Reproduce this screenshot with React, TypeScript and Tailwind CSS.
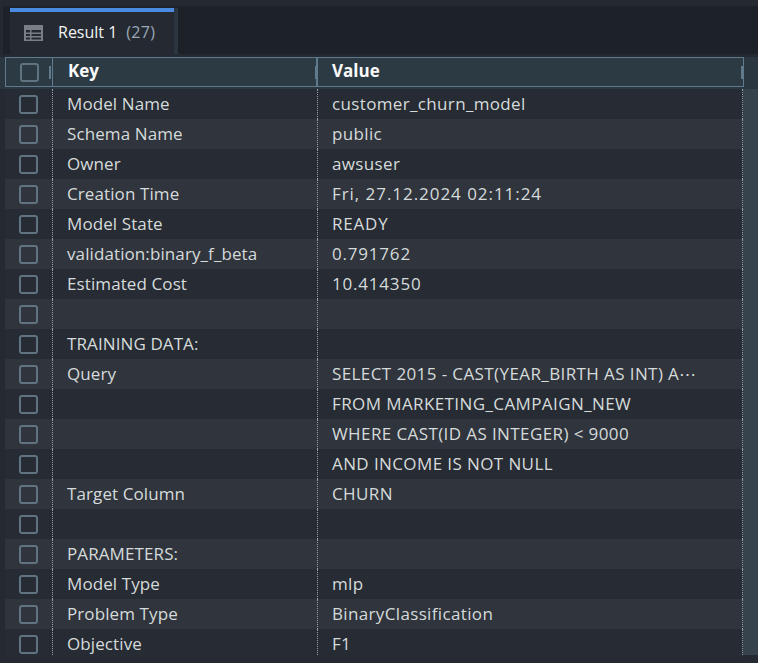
// [key, value, letter spacing for the value]
const rows: [string, string, string][] = [
  ["Model Name", "customer_churn_model", "tracking-[0.35px]"],
  ["Schema Name", "public", "tracking-[0.35px]"],
  ["Owner", "awsuser", "tracking-[0.35px]"],
  ["Creation Time", "Fri, 27.12.2024 02:11:24", "tracking-[0.95px]"],
  ["Model State", "READY", "tracking-[0.8px]"],
  ["validation:binary_f_beta", "0.791762", "tracking-[0.8px]"],
  ["Estimated Cost", "10.414350", "tracking-[0.8px]"],
  ["", "", ""],
  ["TRAINING DATA:", "", ""],
  ["Query", "SELECT 2015 - CAST(YEAR_BIRTH AS INT) A⋯", "tracking-[0.4px]"],
  ["", "FROM MARKETING_CAMPAIGN_NEW", "tracking-[0.4px]"],
  ["", "WHERE CAST(ID AS INTEGER) < 9000", "tracking-[0.4px]"],
  ["", "AND INCOME IS NOT NULL", "tracking-[0.4px]"],
  ["Target Column", "CHURN", "tracking-[0.4px]"],
  ["", "", ""],
  ["PARAMETERS:", "", ""],
  ["Model Type", "mlp", "tracking-[0.35px]"],
  ["Problem Type", "BinaryClassification", "tracking-[0.35px]"],
  ["Objective", "F1", "tracking-[0.35px]"],
];

function Checkbox() {
  return <div className="h-[19px] w-[19px] rounded-[3px] border-2 border-[#5f7380]" />;
}

export default function App() {
  return (
    <div className="h-[663px] w-[758px] overflow-hidden bg-[#252a32] pt-[6px] font-['Open_Sans',sans-serif] text-[17px] text-[#d5dbdb]">
      <div className="ml-[3px] flex h-[48px] bg-[#1d2229] pt-[2px]">
        <div className="ml-[7px] flex w-[168px] flex-col border-r-4 border-[#2b3540] bg-[#252a32]">
          <div className="h-[4px] bg-[#4a8ae0]" />
          <div className="flex flex-1 items-center pb-[2px] pl-[14px] text-[16px]">
            <svg width="19" height="16" viewBox="0 0 19 16" fill="#7a7f85" className="mt-[2px]">
              <path d="M0 0h19v16H0z" />
              <path fill="#252a32" d="M2 5h4v2.500H2zM7.500 5H17v2.500H7.500zM2 9h4v2H2zM7.500 9H17v2H7.500zM2 12.500h4V14.500H2zM7.500 12.500H17V14.500H7.500z" />
            </svg>
            <span className="ml-[15px] text-[#f2f3f3]">Result 1</span>
            <span className="ml-[9px] tracking-[0.3px] text-[#9ba7b6]">(27)</span>
          </div>
        </div>
      </div>
      <div className="h-[3px] bg-[#252a32]" />
      <div className="flex h-[32px] bg-[#2b3740] pl-[5px]">
        <div className="flex h-[30px] w-[739px] border border-[#5f7a8c] bg-[#2c3a44] font-bold text-[#fafafa]">
          <div className="relative flex w-[47px] shrink-0 items-center justify-center border-r border-[#5f7a8c] pl-[1px]">
            <Checkbox />
            <div className="absolute top-[8px] right-[1px] h-[13px] w-[2px] bg-[#5f7a8c]" />
          </div>
          <div className="relative flex w-[265px] shrink-0 items-center border-r-2 border-[#5f7a8c] pb-[2px] pl-[15px]">
            Key
            <div className="absolute top-[8px] right-[0px] h-[13px] w-[1px] bg-[#5f7a8c]" />
          </div>
          <div className="relative flex flex-1 items-center pb-[2px] pl-[14px]">
            Value
            <div className="absolute top-[8px] right-0 h-[13px] w-[2px] bg-[#5f7a8c]" />
          </div>
        </div>
      </div>
      <div className="flex items-start pl-[5px]">
        <div className="w-[738px] shrink-0">
          {rows.map(([k, v, spacing], i) => {
            const last = i === rows.length - 1;
            return (
              <div key={i} className={`flex h-[30px] ${i % 2 === 1 ? "bg-[#30343c]" : "bg-[#272b33]"}`}>
                <div className={`flex w-[48px] shrink-0 items-center justify-center border-r border-dotted border-[#9aa0a6] ${last ? "h-[26px] pt-[4px]" : ""}`}>
                  <Checkbox />
                </div>
                <div className={`flex w-[265px] shrink-0 items-center border-r border-dotted border-[#9aa0a6] pl-[14px] ${last ? "h-[26px] pt-[4px]" : ""}`}>
                  <span className="tracking-[0.1px]">{k}</span>
                </div>
                <div className={`flex min-w-0 flex-1 items-center border-r border-dotted border-[#9aa0a6] px-[14px] ${last ? "h-[26px] pt-[4px]" : ""}`}>
                  <span className={`whitespace-nowrap ${spacing}`}>{v}</span>
                </div>
              </div>
            );
          })}
        </div>
        <div className="h-[566px] flex-1 bg-[#36424c]" />
      </div>
    </div>
  );
}
